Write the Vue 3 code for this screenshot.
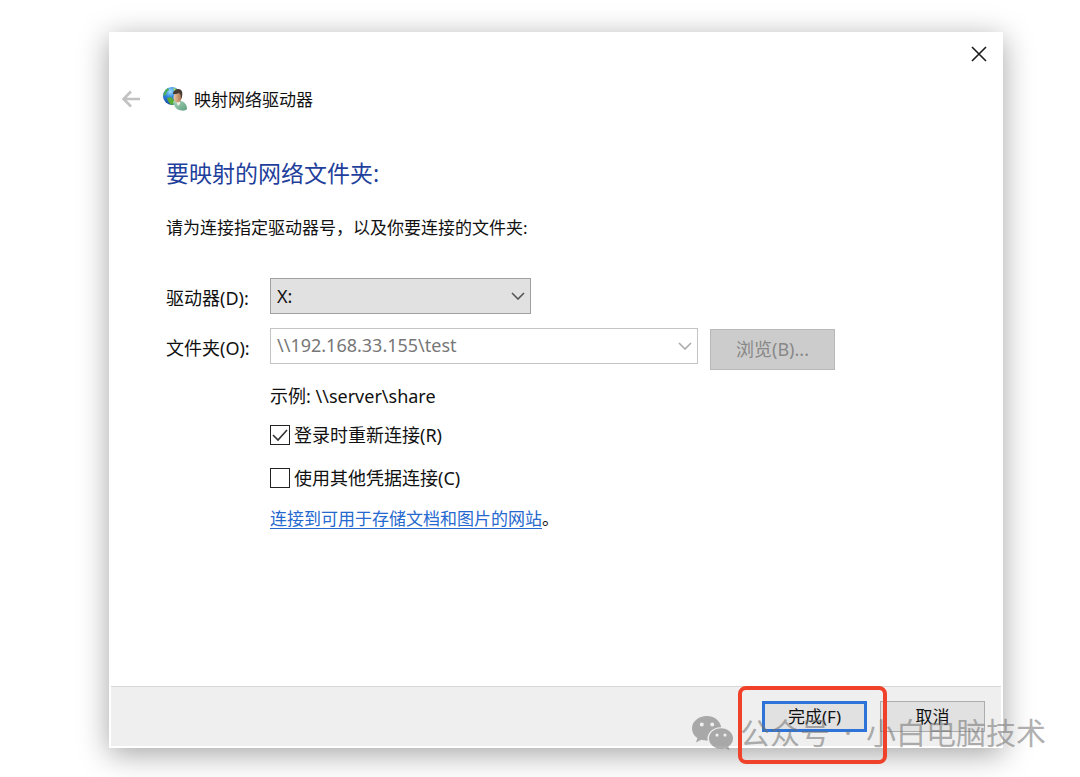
<script setup>
import { ref } from 'vue'

const drive = ref('X:')
const folder = ref('\\\\192.168.33.155\\test')
const example = '\\\\server\\share'
const reconnect = ref(true)
const otherCredentials = ref(false)
</script>

<template>
  <div class="page">
    <main class="dialog">
      <div class="caption">
        <button class="close" type="button" aria-label="关闭">
          <svg width="16" height="16" viewBox="0 0 16 16" fill="none" stroke="#1c1c1c" stroke-width="1.6">
            <path d="M1 1 15 15M15 1 1 15" />
          </svg>
        </button>
      </div>

      <header class="header">
        <button class="back" type="button" aria-label="返回" disabled>
          <svg width="20" height="18" viewBox="0 0 20 18" fill="none" stroke="#c2c2c2" stroke-width="2.6">
            <path d="M19 9H3M10 1.500 2.500 9l7.500 7.500" />
          </svg>
        </button>
        <svg class="app-icon" width="26" height="26" viewBox="0 0 26 26" aria-hidden="true">
          <defs>
            <radialGradient id="globe" cx="0.4" cy="0.25" r="0.8">
              <stop offset="0" stop-color="#9fe0ff" />
              <stop offset="0.4" stop-color="#3087e0" />
              <stop offset="1" stop-color="#123a9c" />
            </radialGradient>
            <linearGradient id="face" x1="0" x2="1">
              <stop offset="0" stop-color="#f0c8a4" />
              <stop offset="1" stop-color="#a4704c" />
            </linearGradient>
            <linearGradient id="shirt" x1="0" y1="0" x2="1" y2="1">
              <stop offset="0" stop-color="#a9d8bd" />
              <stop offset="1" stop-color="#5f9f80" />
            </linearGradient>
          </defs>
          <circle cx="10" cy="10" r="9" fill="url(#globe)" />
          <path d="M2 7C3 4 4 3 6 2l1 2-2 2-1 3-3 1z" fill="#4fae62" />
          <path d="M5 12l4-1 4 4-2 4c-3 0-5-3-6-7z" fill="#58ad34" />
          <path d="M11 2l4 1 1 2-4 0z" fill="#a7e36e" />
          <path d="M11 16c1-2 3-2 4-1l4 0c4 1 6 4 6 8-1 2-6 2-8 1-3-1-5-4-6-8z" fill="url(#shirt)" />
          <path d="M14 15l4 0 0 3-2 2z" fill="#f3eee6" />
          <ellipse cx="15.500" cy="11.500" rx="4" ry="5" fill="url(#face)" />
          <path d="M11 8c0-3 3-5 5-5 4 0 5 3 4 8l-1 2c0-3 0-5-2-6-2 1-4 1-6 1z" fill="#493a34" />
        </svg>
        <span class="app-title">映射网络驱动器</span>
      </header>

      <section class="content">
        <h1>要映射的网络文件夹:</h1>
        <p class="intro">请为连接指定驱动器号，以及你要连接的文件夹:</p>

        <form class="form" @submit.prevent>
          <label for="drive">驱动器(D):</label>
          <div class="field drive">
            <select id="drive" v-model="drive">
              <option>X:</option>
            </select>
            <svg class="chevron" width="14" height="8" viewBox="0 0 14 8" fill="none" stroke="#555" stroke-width="1.6">
              <path d="M1 1l6 6 6-6" />
            </svg>
          </div>

          <label for="folder">文件夹(O):</label>
          <div class="folder-row">
            <div class="field folder">
              <input id="folder" v-model="folder" type="text" />
              <svg class="chevron" width="14" height="8" viewBox="0 0 14 8" fill="none" stroke="#aaa" stroke-width="1.6">
                <path d="M1 1l6 6 6-6" />
              </svg>
            </div>
            <button class="browse" type="button" disabled>浏览(B)...</button>
          </div>

          <div class="options">
            <p>示例: {{ example }}</p>
            <label class="check">
              <span class="tick">
                <input v-model="reconnect" type="checkbox" />
                <svg v-if="reconnect" width="20" height="20" viewBox="0 0 20 20" fill="none" stroke="#333" stroke-width="1.6">
                  <path d="M3 10l5 5L17 5" />
                </svg>
              </span>
              登录时重新连接(R)
            </label>
            <label class="check second">
              <span class="tick">
                <input v-model="otherCredentials" type="checkbox" />
                <svg v-if="otherCredentials" width="20" height="20" viewBox="0 0 20 20" fill="none" stroke="#333" stroke-width="1.6">
                  <path d="M3 10l5 5L17 5" />
                </svg>
              </span>
              使用其他凭据连接(C)
            </label>
            <p class="site"><a href="#">连接到可用于存储文档和图片的网站</a>。</p>
          </div>
        </form>
      </section>

      <footer class="footer">
        <div class="marked">
          <button class="action primary" type="button">完成(F)</button>
          <span class="highlight"></span>
        </div>
        <button class="action" type="button">取消</button>
      </footer>

      <div class="watermark">
        <svg width="42" height="34" viewBox="0 0 42 34" aria-hidden="true">
          <path
            fill="currentColor"
            fill-rule="evenodd"
            d="M15 0C6.500 0 0 5.500 0 12.500c0 4 2 7.300 5.400 9.600L4 26.500l5.200-2.700c2 .6 4.200.9 6.600.8-1.800-7 4.700-13.700 13.400-13.400C28 4.500 22 0 15 0zM9.800 6.400a2 2 0 1 1 0 4 2 2 0 0 1 0-4zm10.400 0a2 2 0 1 1 0 4 2 2 0 0 1 0-4z"
          />
          <path
            fill="currentColor"
            fill-rule="evenodd"
            d="M29 12.200c-6.800 0-12 4.500-12 10.200 0 5.800 5.300 10.200 12 10.200 1.600 0 3-.2 4.300-.6l4.200 2-1.200-3.600c3-1.900 4.700-4.700 4.700-8 0-5.700-5.300-10.200-12-10.200zm-4 5.300a1.600 1.600 0 1 1 0 3.200 1.600 1.600 0 0 1 0-3.200zm8 0a1.600 1.600 0 1 1 0 3.200 1.600 1.600 0 0 1 0-3.200z"
          />
        </svg>
        <div class="account"><span>公众号</span><span>·</span><span>小白电脑技术</span></div>
      </div>
    </main>
  </div>
</template>

<style>
body {
  margin: 0;
  background: #fff;
}
</style>

<style scoped>
* {
  box-sizing: border-box;
}

.page {
  display: flex;
  min-height: 100vh;
  padding: 32px 77px 29px 109px;
  overflow: hidden;
  color: #111;
  font: 17px/24px "Noto Sans", "Noto Sans CJK SC", sans-serif;
}

button,
input,
select {
  margin: 0;
  padding: 0;
  border: 0;
  border-radius: 0;
  color: inherit;
  font: inherit;
}

.dialog {
  position: relative;
  display: flex;
  flex: 1;
  flex-direction: column;
  min-width: 0;
  padding: 0 2px 2px;
  background: #fff;
  box-shadow: 0 6px 28px rgba(0, 0, 0, 0.36);
}

.caption {
  display: flex;
  justify-content: flex-end;
  padding: 6px 6px 0 0;
}

.close,
.back {
  display: grid;
  place-items: center;
  background: none;
}

.close {
  width: 32px;
  height: 32px;
}

.header {
  display: flex;
  align-items: center;
  height: 32px;
  margin-top: 13px;
  padding-left: 10px;
}

.back {
  width: 20px;
  height: 20px;
}

.app-icon {
  margin-left: 21px;
}

.app-title {
  margin-left: 6px;
  padding-top: 2px;
}

.content {
  flex: 1;
  padding: 42px 24px 24px 55px;
}

h1 {
  margin: 0;
  color: #1f3f9c;
  font-size: 23px;
  font-weight: 400;
  line-height: 32px;
}

p {
  margin: 0;
}

.intro {
  margin-top: 27px;
}

.form {
  display: grid;
  grid-template-columns: 104px 1fr;
  row-gap: 14px;
  margin-top: 38px;
  font-size: 18px;
}

.form > label {
  padding-top: 8px;
}

.field {
  display: grid;
  grid-template-columns: 1fr;
  align-items: center;
  height: 36px;
}

.field > * {
  grid-area: 1 / 1;
}

.field .chevron {
  justify-self: end;
  margin-right: 6px;
  pointer-events: none;
}

.drive {
  width: 261px;
}

.folder {
  flex: 0 1 428px;
}

.field select,
.field input {
  width: 100%;
  height: 36px;
  padding: 0 28px 0 6px;
  border: 1px solid #a0a0a0;
  appearance: none;
  background: #e1e1e1;
}

.field input {
  padding-bottom: 2px;
  border-color: #c4c4c4;
  background: #fff;
  color: #777;
}

.folder-row {
  display: flex;
  align-items: flex-end;
  gap: 12px;
  height: 42px;
}

.folder-row .folder {
  align-self: flex-start;
}

.browse {
  width: 125px;
  height: 41px;
  padding-bottom: 2px;
  border: 1px solid #b8b8b8;
  background: #ccc;
  color: #888;
}

.options {
  grid-column: 2;
}

.check {
  display: flex;
  align-items: center;
  gap: 4px;
  margin-top: 15px;
}

.check.second {
  margin-top: 19px;
}

.tick {
  display: grid;
  width: 20px;
  height: 20px;
}

.tick > * {
  grid-area: 1 / 1;
}

.tick input {
  width: 20px;
  height: 20px;
  border: 1px solid #222;
  appearance: none;
  background: #fff;
}

.tick svg {
  pointer-events: none;
}

.site {
  margin-top: 17px;
  font-size: 17px;
}

.site a {
  color: #2569cf;
  text-decoration-thickness: 1px;
  text-underline-offset: 3px;
}

.footer {
  display: flex;
  align-items: flex-start;
  justify-content: flex-end;
  gap: 13px;
  height: 60px;
  padding: 14px 16px 0;
  border-top: 1px solid #d8d8d8;
  background: #efefef;
}

.action {
  display: block;
  width: 105px;
  height: 31px;
  border: 1px solid #adadad;
  background: #e1e1e1;
}

.action.primary {
  border: 3px solid #2e74d8;
}

.marked {
  position: relative;
}

.highlight {
  position: absolute;
  z-index: 1;
  top: -15px;
  right: -20px;
  bottom: -32px;
  left: -24px;
  border: 4px solid #f0412a;
  border-radius: 8px;
  pointer-events: none;
}

.watermark {
  position: absolute;
  right: -43px;
  bottom: -7px;
  display: flex;
  align-items: center;
  gap: 6px;
  color: rgba(110, 110, 110, 0.55);
  font-size: 30px;
  line-height: 44px;
  white-space: nowrap;
  pointer-events: none;
}

.account {
  display: flex;
  gap: 14px;
}
</style>
